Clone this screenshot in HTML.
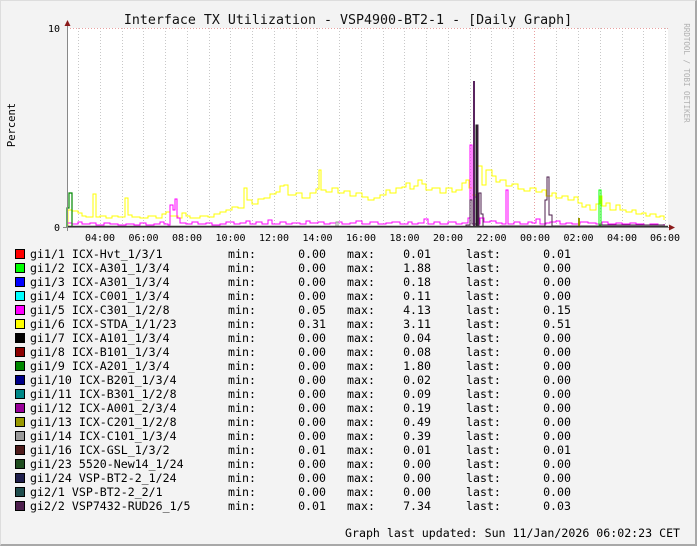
<!DOCTYPE html>
<html><head><meta charset="utf-8"><style>
html,body{margin:0;padding:0}
body{width:697px;height:546px;background:#f3f3f3;position:relative;overflow:hidden;font-family:"DejaVu Sans Mono","Liberation Mono",monospace;color:#000}
.frame{position:absolute;left:0;top:0;width:695px;height:544px;border-right:2px solid #a8a8a8;border-bottom:2px solid #a8a8a8;border-top:1px solid #ddd;border-left:1px solid #ddd;box-sizing:border-box;width:697px;height:546px}
.row{position:absolute;left:0;height:14px;line-height:14px;font-size:11.6px;white-space:pre}
.row span{position:absolute;top:0}
.sq{position:absolute;left:15px;top:2px;width:8px;height:8px;border:1px solid #000}
.r{text-align:right;width:60px}
</style></head><body>
<div class="frame"></div>
<svg width="697" height="546" style="position:absolute;left:0;top:0" font-family="DejaVu Sans Mono, Liberation Mono, monospace">
<rect x="67" y="28" width="601" height="199" fill="#fff"/>
<g stroke="#c8c8c8" stroke-dasharray="1,2" stroke-width="1">
<line x1="78.5" y1="28" x2="78.5" y2="227"/><line x1="100.5" y1="28" x2="100.5" y2="227"/><line x1="122.5" y1="28" x2="122.5" y2="227"/><line x1="143.5" y1="28" x2="143.5" y2="227"/><line x1="165.5" y1="28" x2="165.5" y2="227"/><line x1="187.5" y1="28" x2="187.5" y2="227"/><line x1="209.5" y1="28" x2="209.5" y2="227"/><line x1="230.5" y1="28" x2="230.5" y2="227"/><line x1="252.5" y1="28" x2="252.5" y2="227"/><line x1="274.5" y1="28" x2="274.5" y2="227"/><line x1="296.5" y1="28" x2="296.5" y2="227"/><line x1="317.5" y1="28" x2="317.5" y2="227"/><line x1="339.5" y1="28" x2="339.5" y2="227"/><line x1="361.5" y1="28" x2="361.5" y2="227"/><line x1="383.5" y1="28" x2="383.5" y2="227"/><line x1="404.5" y1="28" x2="404.5" y2="227"/><line x1="426.5" y1="28" x2="426.5" y2="227"/><line x1="448.5" y1="28" x2="448.5" y2="227"/><line x1="470.5" y1="28" x2="470.5" y2="227"/><line x1="491.5" y1="28" x2="491.5" y2="227"/><line x1="513.5" y1="28" x2="513.5" y2="227"/><line x1="556.5" y1="28" x2="556.5" y2="227"/><line x1="578.5" y1="28" x2="578.5" y2="227"/><line x1="600.5" y1="28" x2="600.5" y2="227"/><line x1="622.5" y1="28" x2="622.5" y2="227"/><line x1="643.5" y1="28" x2="643.5" y2="227"/><line x1="665.5" y1="28" x2="665.5" y2="227"/>
</g>
<g stroke="#e8a0a0" stroke-dasharray="1,2"><line x1="534.5" y1="28" x2="534.5" y2="227"/><line x1="67" y1="28.5" x2="668" y2="28.5"/></g>
<path fill="none" stroke="#ffff00" stroke-width="1" d="M68 227V210H72V211H78V213H82V216H86V217H93V194H96V217H100V216H106V218H112V216H118V217H125V198H128V215H132V217H140V218H148V216H156V218H162V214H166V212H170V216H178V218H182V213H186V216H190V218H200V216H208V217H214V214H220V212H226V210H232V207H238V208H244V188H247V200H252V204H258V199H264V198H270V194H276V192H280V186H284V185H288V195H296V193H302V198H310V193H316V189H319V170H321V190H326V192H332V188H338V193H344V191H350V196H356V193H362V197H368V200H374V198H380V195H386V190H390V193H396V188H402V187H406V183H410V189H414V186H418V180H422V184H426V190H432V188H440V193H446V188H452V192H456V190H462V183H466V180H469V188H472V195H476V175H478V166H482V185H486V170H492V176H496V182H500V180H506V186H512V184H518V189H524V191H530V188H536V192H542V190H546V196H552V193H556V198H562V196H568V200H574V197H578V203H582V207H586V205H590V210H596V204H600V196H602V206H606V203H610V210H616V205H620V210H626V212H632V210H636V214H642V213H646V216H650V214H656V217H660V216H664V220"/>
<path fill="none" stroke="#ff00ff" stroke-width="1" d="M67 225V223H72V224H78V222H82V224H90V223H96V225H104V223H110V224H118V225H126V224H134V225H140V223H146V225H154V224H160V222H164V224H168V225H170V205H173V210H175V199H177V218H180V223H186V224H192V222H198V224H206V223H212V225H220V224H226V222H234V224H240V223H246V221H250V224H256V222H262V224H268V220H272V224H280V222H286V224H292V223H300V224H306V221H310V223H318V222H324V224H330V223H336V222H342V224H350V223H356V221H362V224H370V222H378V224H386V223H392V222H400V224H408V222H412V224H418V223H424V219H428V224H434V222H440V224H448V222H456V224H462V223H468V218H470V145H472V224H474V197H476V224H480V218H484V222H490V221H496V223H502V224H506V190H508V224H514V222H520V224H528V222H532V223H536V219H540V224H546V223H550V222H556V221H560V224H566V223H572V224H580V222H588V223H596V224H602V222H608V224H616V223H622V224H630V223H636V224H644V225H650V224H658V225H664V224"/>
<path fill="#5a2460" d="M473 227V81H475V227Z"/>
<path fill="none" stroke="#4d1f4d" stroke-width="1" d="M466 227V225H470V200H472V224H476V125H478V227H479V193H481V214H483V227H500V226H545V200H547V177H549V215H552V226H600V225H665"/>
<path fill="none" stroke="#222" stroke-width="1" d="M476 227V125H477V227"/>
<path fill="none" stroke="#008800" stroke-width="1.2" d="M67 227V208H69V193H72V227"/>
<path fill="none" stroke="#00ff00" stroke-width="1" d="M599 227V190H601V227"/>
<path fill="none" stroke="#999900" stroke-width="2" d="M579 227V218"/>
<path fill="none" stroke="#999" stroke-width="1" d="M336 227V222H338V227"/>
<line x1="67" y1="226.5" x2="668" y2="226.5" stroke="#333" stroke-width="1.5"/>
<line x1="67.5" y1="22" x2="67.5" y2="231" stroke="#888"/>
<line x1="63" y1="227.5" x2="672" y2="227.5" stroke="#888"/>
<path d="M64.5 26L67.5 20L70.5 26Z" fill="#8b1a1a"/>
<path d="M669 224.5L675 227.5L669 230.5Z" fill="#8b1a1a"/>
<text x="348" y="24" font-size="13.3" text-anchor="middle" fill="#111">Interface TX Utilization - VSP4900-BT2-1 - [Daily Graph]</text>
<text x="60" y="32" font-size="10" text-anchor="end">10</text>
<text x="60" y="231" font-size="10" text-anchor="end">0</text>
<text transform="translate(15,125) rotate(-90)" font-size="10.5" text-anchor="middle">Percent</text>
<text transform="translate(684,73) rotate(90)" font-size="7.5" fill="#b0b0b0" text-anchor="middle">RRDTOOL / TOBI OETIKER</text>
<g font-size="10" text-anchor="middle">
<text x="100" y="241">04:00</text><text x="143.5" y="241">06:00</text><text x="187" y="241">08:00</text><text x="230.5" y="241">10:00</text><text x="274" y="241">12:00</text><text x="317.5" y="241">14:00</text><text x="361" y="241">16:00</text><text x="404.5" y="241">18:00</text><text x="448" y="241">20:00</text><text x="491.5" y="241">22:00</text><text x="535" y="241">00:00</text><text x="578.5" y="241">02:00</text><text x="622" y="241">04:00</text><text x="665" y="241">06:00</text>
</g>
</svg>

<div class="row" style="top:247px"><i class="sq" style="background:#ff0000"></i><span style="left:30px">gi1/1 ICX-Hvt_1/3/1</span><span style="left:228px">min:</span><span class="r" style="left:266px">0.00</span><span style="left:347px">max:</span><span class="r" style="left:371px">0.01</span><span style="left:466px">last:</span><span class="r" style="left:511px">0.01</span></div>
<div class="row" style="top:261px"><i class="sq" style="background:#00ff00"></i><span style="left:30px">gi1/2 ICX-A301_1/3/4</span><span style="left:228px">min:</span><span class="r" style="left:266px">0.00</span><span style="left:347px">max:</span><span class="r" style="left:371px">1.88</span><span style="left:466px">last:</span><span class="r" style="left:511px">0.00</span></div>
<div class="row" style="top:275px"><i class="sq" style="background:#0000ff"></i><span style="left:30px">gi1/3 ICX-A301_1/3/4</span><span style="left:228px">min:</span><span class="r" style="left:266px">0.00</span><span style="left:347px">max:</span><span class="r" style="left:371px">0.18</span><span style="left:466px">last:</span><span class="r" style="left:511px">0.00</span></div>
<div class="row" style="top:289px"><i class="sq" style="background:#00ffff"></i><span style="left:30px">gi1/4 ICX-C001_1/3/4</span><span style="left:228px">min:</span><span class="r" style="left:266px">0.00</span><span style="left:347px">max:</span><span class="r" style="left:371px">0.11</span><span style="left:466px">last:</span><span class="r" style="left:511px">0.00</span></div>
<div class="row" style="top:303px"><i class="sq" style="background:#ff00ff"></i><span style="left:30px">gi1/5 ICX-C301_1/2/8</span><span style="left:228px">min:</span><span class="r" style="left:266px">0.05</span><span style="left:347px">max:</span><span class="r" style="left:371px">4.13</span><span style="left:466px">last:</span><span class="r" style="left:511px">0.15</span></div>
<div class="row" style="top:317px"><i class="sq" style="background:#ffff00"></i><span style="left:30px">gi1/6 ICX-STDA_1/1/23</span><span style="left:228px">min:</span><span class="r" style="left:266px">0.31</span><span style="left:347px">max:</span><span class="r" style="left:371px">3.11</span><span style="left:466px">last:</span><span class="r" style="left:511px">0.51</span></div>
<div class="row" style="top:331px"><i class="sq" style="background:#000000"></i><span style="left:30px">gi1/7 ICX-A101_1/3/4</span><span style="left:228px">min:</span><span class="r" style="left:266px">0.00</span><span style="left:347px">max:</span><span class="r" style="left:371px">0.04</span><span style="left:466px">last:</span><span class="r" style="left:511px">0.00</span></div>
<div class="row" style="top:345px"><i class="sq" style="background:#8b0000"></i><span style="left:30px">gi1/8 ICX-B101_1/3/4</span><span style="left:228px">min:</span><span class="r" style="left:266px">0.00</span><span style="left:347px">max:</span><span class="r" style="left:371px">0.08</span><span style="left:466px">last:</span><span class="r" style="left:511px">0.00</span></div>
<div class="row" style="top:359px"><i class="sq" style="background:#008800"></i><span style="left:30px">gi1/9 ICX-A201_1/3/4</span><span style="left:228px">min:</span><span class="r" style="left:266px">0.00</span><span style="left:347px">max:</span><span class="r" style="left:371px">1.80</span><span style="left:466px">last:</span><span class="r" style="left:511px">0.00</span></div>
<div class="row" style="top:373px"><i class="sq" style="background:#000088"></i><span style="left:30px">gi1/10 ICX-B201_1/3/4</span><span style="left:228px">min:</span><span class="r" style="left:266px">0.00</span><span style="left:347px">max:</span><span class="r" style="left:371px">0.02</span><span style="left:466px">last:</span><span class="r" style="left:511px">0.00</span></div>
<div class="row" style="top:387px"><i class="sq" style="background:#008888"></i><span style="left:30px">gi1/11 ICX-B301_1/2/8</span><span style="left:228px">min:</span><span class="r" style="left:266px">0.00</span><span style="left:347px">max:</span><span class="r" style="left:371px">0.09</span><span style="left:466px">last:</span><span class="r" style="left:511px">0.00</span></div>
<div class="row" style="top:401px"><i class="sq" style="background:#990099"></i><span style="left:30px">gi1/12 ICX-A001_2/3/4</span><span style="left:228px">min:</span><span class="r" style="left:266px">0.00</span><span style="left:347px">max:</span><span class="r" style="left:371px">0.19</span><span style="left:466px">last:</span><span class="r" style="left:511px">0.00</span></div>
<div class="row" style="top:415px"><i class="sq" style="background:#999900"></i><span style="left:30px">gi1/13 ICX-C201_1/2/8</span><span style="left:228px">min:</span><span class="r" style="left:266px">0.00</span><span style="left:347px">max:</span><span class="r" style="left:371px">0.49</span><span style="left:466px">last:</span><span class="r" style="left:511px">0.00</span></div>
<div class="row" style="top:429px"><i class="sq" style="background:#999999"></i><span style="left:30px">gi1/14 ICX-C101_1/3/4</span><span style="left:228px">min:</span><span class="r" style="left:266px">0.00</span><span style="left:347px">max:</span><span class="r" style="left:371px">0.39</span><span style="left:466px">last:</span><span class="r" style="left:511px">0.00</span></div>
<div class="row" style="top:443px"><i class="sq" style="background:#4d1a1a"></i><span style="left:30px">gi1/16 ICX-GSL_1/3/2</span><span style="left:228px">min:</span><span class="r" style="left:266px">0.01</span><span style="left:347px">max:</span><span class="r" style="left:371px">0.01</span><span style="left:466px">last:</span><span class="r" style="left:511px">0.01</span></div>
<div class="row" style="top:457px"><i class="sq" style="background:#1f4d1f"></i><span style="left:30px">gi1/23 5520-New14_1/24</span><span style="left:228px">min:</span><span class="r" style="left:266px">0.00</span><span style="left:347px">max:</span><span class="r" style="left:371px">0.00</span><span style="left:466px">last:</span><span class="r" style="left:511px">0.00</span></div>
<div class="row" style="top:471px"><i class="sq" style="background:#1f1f4d"></i><span style="left:30px">gi1/24 VSP-BT2-2_1/24</span><span style="left:228px">min:</span><span class="r" style="left:266px">0.00</span><span style="left:347px">max:</span><span class="r" style="left:371px">0.00</span><span style="left:466px">last:</span><span class="r" style="left:511px">0.00</span></div>
<div class="row" style="top:485px"><i class="sq" style="background:#1f4d4d"></i><span style="left:30px">gi2/1 VSP-BT2-2_2/1</span><span style="left:228px">min:</span><span class="r" style="left:266px">0.00</span><span style="left:347px">max:</span><span class="r" style="left:371px">0.00</span><span style="left:466px">last:</span><span class="r" style="left:511px">0.00</span></div>
<div class="row" style="top:499px"><i class="sq" style="background:#4d1f4d"></i><span style="left:30px">gi2/2 VSP7432-RUD26_1/5</span><span style="left:228px">min:</span><span class="r" style="left:266px">0.01</span><span style="left:347px">max:</span><span class="r" style="left:371px">7.34</span><span style="left:466px">last:</span><span class="r" style="left:511px">0.03</span></div>
<div class="row" style="top:526px"><span style="left:345px">Graph last updated: Sun 11/Jan/2026 06:02:23 CET</span></div>
</body></html>
